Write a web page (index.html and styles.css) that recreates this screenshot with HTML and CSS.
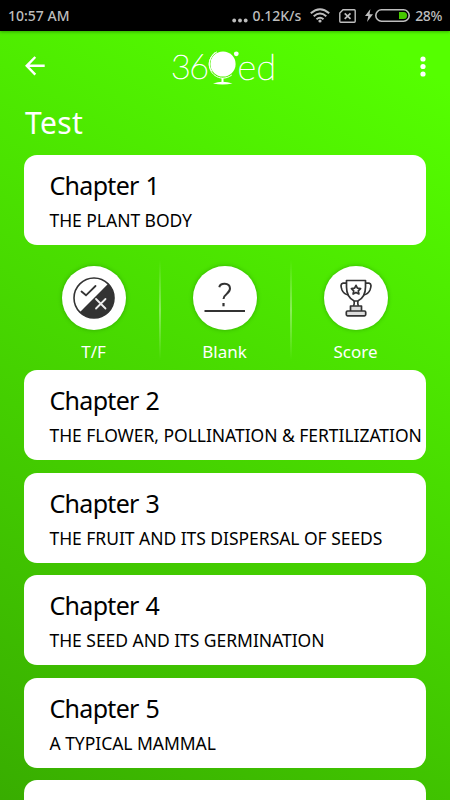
FILE: index.html
```html
<!DOCTYPE html>
<html lang="en">
<head>
    <meta charset="UTF-8">
    <meta name="viewport" content="width=device-width, initial-scale=1.0">
    <title>360ed - Test</title>
    <link rel="stylesheet" href="styles.css">
</head>
<body>
    <div class="status-bar">
        <span class="time">10:57 AM</span>
        <div class="status-right">
            <svg class="dots" width="16" height="5" viewBox="0 0 16 5" fill="#bdbdbd"><circle cx="2.2" cy="2.5" r="1.9"/><circle cx="8" cy="2.5" r="1.9"/><circle cx="13.7" cy="2.5" r="1.9"/></svg>
            <span class="speed">0.12K/s</span>
            <svg class="wifi" width="20" height="15" viewBox="0 0 20 15" fill="none" stroke="#bdbdbd" stroke-width="2"><path d="M.8 5.2Q10-2.8 19.2 5.2M3.7 8.3Q10 2.8 16.3 8.3M6.5 11.2Q10 8.3 13.5 11.2"/><circle cx="10" cy="13" r="1.6" fill="#bdbdbd" stroke="none"/></svg>
            <svg class="sim" width="17" height="14" viewBox="0 0 17 14" fill="none" stroke="#bdbdbd" stroke-width="1.4"><path d="M4 .8H15.3Q16.2.8 16.2 1.7V12.3Q16.2 13.2 15.3 13.2H1.7Q.8 13.2.8 12.3V4Z"/><path d="M5.7 4.3l5.8 5.5M11.5 4.3L5.7 9.8" stroke-width="1.7"/></svg>
            <svg class="bolt" width="8" height="13" viewBox="0 0 8 13" fill="#bdbdbd"><path d="M5.4 0L0 7H3.3L2 13L8 5.3H4.5Z"/></svg>
            <svg class="battery" width="35" height="13" viewBox="0 0 35 13"><rect x=".8" y=".8" width="33.4" height="11.4" rx="5.7" fill="none" stroke="#bdbdbd" stroke-width="1.6"/><path d="M24 3H28.5A3.5 3.5 0 0 1 28.5 10H24Z" fill="#46c800"/></svg>
            <span class="percent">28%</span>
        </div>
    </div>

    <header class="header">
        <svg class="back" width="20" height="20" viewBox="0 0 20 20" fill="none" stroke="#fff" stroke-width="2.4"><path d="M10.3 1L1.7 9.8L10.3 18.7M1.7 9.8H19.7"/></svg>
        <div class="logo">
            <span class="logo-num">36</span>
            <svg class="globe" width="31" height="36" viewBox="0 0 31 36"><circle cx="15" cy="14" r="12.6" fill="#fff"/><circle cx="28.3" cy="3.8" r="2.4" fill="#fff"/><path d="M9 1.8C-1 7-1 20 7 25.5C11 28.7 18 29.5 23.8 25M7.5 2C1 8-1 15 4 21.5" fill="none" stroke="#fff" stroke-width="1"/><path d="M14.5 28V32" stroke="#fff" stroke-width="2"/><path d="M5 33.5Q14.5 30 24.5 33.5Q14.5 35.3 5 33.5Z" fill="#fff"/></svg>
            <span class="logo-ed">ed</span>
        </div>
        <svg class="more" width="6" height="21" viewBox="0 0 6 21" fill="#fff"><circle cx="3" cy="3" r="2.6"/><circle cx="3" cy="10.5" r="2.6"/><circle cx="3" cy="18" r="2.6"/></svg>
    </header>

    <h1>Test</h1>

    <main class="chapters">
        <div class="card">
            <h2>Chapter 1</h2>
            <p>THE PLANT BODY</p>
        </div>

        <div class="actions">
            <div class="action">
                <div class="circle">
                    <svg width="42" height="42" viewBox="0 0 42 42" fill="none" stroke-linecap="round"><path d="M35.2 6.8A20 20 0 0 1 6.8 35.2Z" fill="#333"/><circle cx="21" cy="21" r="20" stroke="#333" stroke-width="1.6"/><path d="M8.5 14.5L13 18.3L22.5 9" stroke="#333" stroke-width="1.8"/><path d="M23 22L32.5 31.5M32.5 22L23 31.5" stroke="#eee" stroke-width="1.8"/></svg>
                </div>
                <span>T/F</span>
            </div>
            <div class="action">
                <div class="circle">
                    <svg width="42" height="42" viewBox="0 0 42 42" fill="none" stroke="#333"><path d="M15.3 10.2C16.2 5.8 25.5 5.3 26 11.3C26.3 16.7 19.7 16.5 19.5 22" stroke-width="2"/><path d="M19.5 26V29.3" stroke-width="2.2"/><path d="M.5 34H41" stroke-width="2"/></svg>
                </div>
                <span>Blank</span>
            </div>
            <div class="action">
                <div class="circle">
                    <svg width="32" height="38" viewBox="0 0 32 38" fill="none" stroke="#333" stroke-width="1.7" stroke-linejoin="round"><path d="M6.5 1.5H25.5V8C25.5 15 22 20 17.8 22H14.2C10 20 6.5 15 6.5 8Z"/><path d="M6.5 4.2H3C.5 4.5.6 7.5 2 11C3.2 13.8 5.5 15.5 8.5 16M25.5 4.2H29C31.5 4.5 31.4 7.5 30 11C28.8 13.8 26.5 15.5 23.5 16"/><path d="M16 6.3L17.4 9.2L20.6 9.6L18.3 11.8L18.9 15L16 13.4L13.1 15L13.7 11.8L11.4 9.6L14.6 9.2Z"/><path d="M14.2 22Q14.5 25 13.5 27M17.8 22Q17.5 25 18.5 27"/><path d="M10.5 32V27H21.5V32" fill="#ddd"/><rect x="6.3" y="32" width="19.4" height="4.8" rx="1.2" fill="#ddd"/></svg>
                </div>
                <span>Score</span>
            </div>
        </div>

        <div class="card">
            <h2>Chapter 2</h2>
            <p>THE FLOWER, POLLINATION &amp; FERTILIZATION</p>
        </div>
        <div class="card">
            <h2>Chapter 3</h2>
            <p>THE FRUIT AND ITS DISPERSAL OF SEEDS</p>
        </div>
        <div class="card">
            <h2>Chapter 4</h2>
            <p>THE SEED AND ITS GERMINATION</p>
        </div>
        <div class="card">
            <h2>Chapter 5</h2>
            <p>A TYPICAL MAMMAL</p>
        </div>
        <div class="card last"></div>
    </main>
</body>
</html>
```

FILE: styles.css
```css
/* General Styling */
* {
    box-sizing: border-box;
}

body {
    margin: 0;
    height: 800px;
    overflow: hidden;
    font-family: 'Noto Sans', 'Open Sans', sans-serif;
    background: linear-gradient(210deg, #55ff00 8%, #38ad00 100%);
}

h1, h2, p {
    margin: 0;
    font-weight: 400;
}

svg {
    display: block;
    flex-shrink: 0;
}

/* Status bar */
.status-bar {
    height: 31px;
    padding: 0 8px;
    display: flex;
    align-items: center;
    justify-content: space-between;
    background: #000;
    color: #bdbdbd;
    font-size: 14px;
    font-weight: 500;
    line-height: 31px;
    box-shadow: 0 1px 3px rgba(0, 60, 0, 0.4);
}

.status-right {
    display: flex;
    align-items: center;
}

.dots {
    margin: 10px 4px 0 0;
}

.wifi {
    margin: 0 9px 0 9px;
}

.bolt {
    margin: 0 2px 0 9px;
}

.battery {
    margin-right: 5px;
}

.percent {
    letter-spacing: -0.4px;
}

/* Header */
.header {
    height: 70px;
    padding: 0 24px 0 25px;
    display: flex;
    align-items: center;
}

.logo {
    display: flex;
    align-items: center;
    height: 44px;
    margin-left: 126px;
    color: #fff;
    font-family: Lato, sans-serif;
    font-size: 34px;
    font-weight: 200;
    line-height: 44px;
    letter-spacing: -1.5px;
    -webkit-text-stroke: 0.7px #fff;
}

.logo-ed {
    font-size: 36px;
    letter-spacing: 0.5px;
}

.globe {
    margin: 3px -2px 0 1px;
}

.more {
    margin-left: auto;
}

h1 {
    height: 54px;
    padding-left: 25px;
    color: #fff;
    font-size: 30px;
    line-height: 43px;
    letter-spacing: 0.4px;
}

/* Chapters */
.chapters {
    display: flex;
    flex-direction: column;
    gap: 12.6px;
    height: 645px;
    padding: 0 24px;
    overflow: hidden;
}

.card {
    height: 90px;
    flex-shrink: 0;
    padding: 13px 0 0 25.5px;
    border-radius: 13px;
    background: #fff;
    color: #000;
    white-space: nowrap;
}

.card.last {
    height: 20px;
    border-radius: 13px 13px 0 0;
}

.card h2 {
    font-size: 25px;
    line-height: 34px;
    letter-spacing: -0.7px;
    word-spacing: 1px;
}

.card p {
    margin-top: 6px;
    font-size: 17.5px;
    line-height: 24px;
    letter-spacing: -0.04px;
}

.actions {
    display: flex;
    flex-shrink: 0;
    height: 125px;
    margin: -12.6px 5px -12.5px 4px;
    color: #fff;
}

.action {
    flex: 1;
    display: flex;
    flex-direction: column;
    align-items: center;
    padding-top: 21px;
    font-size: 17px;
    line-height: 24px;
}

.action + .action {
    background: linear-gradient(transparent, rgba(255, 255, 255, 0.35) 50%, transparent) 0 15px / 2px 100px no-repeat;
}

.circle {
    width: 64px;
    height: 64px;
    margin-bottom: 10px;
    display: flex;
    align-items: center;
    justify-content: center;
    border-radius: 50%;
    background: #fff;
    box-shadow: 0 0 4px rgba(0, 80, 0, 0.35);
}
```
